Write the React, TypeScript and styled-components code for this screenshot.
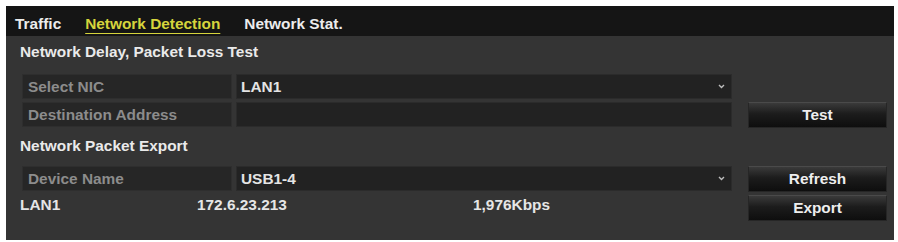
import React from 'react';
import styled, { createGlobalStyle } from 'styled-components';

const GlobalStyle = createGlobalStyle`
  html, body {
    margin: 0;
    padding: 0;
    background: #ffffff;
  }
  body {
    font-family: "Liberation Sans", Arial, sans-serif;
  }
`;

const tabs = ['Traffic', 'Network Detection', 'Network Stat.'];

const Chevron: React.FC = () => (
  <svg width="7" height="5" viewBox="0 0 7 5">
    <path d="M1 1 L3.5 3.5 L6 1" stroke="#bdbdbd" strokeWidth="1.4" fill="none" />
  </svg>
);

const App: React.FC = () => {
  return (
    <Page>
      <GlobalStyle />
      <Panel>
        <TabBar>
          {tabs.map((t, i) => (
            <Tab key={t} $active={i === 1}>
              {t}
            </Tab>
          ))}
        </TabBar>

        <Content>
          <SectionTitle>Network Delay, Packet Loss Test</SectionTitle>
          <Row>
            <Field>
              <Label>Select NIC</Label>
              <Value>
                LAN1
                <Chevron />
              </Value>
            </Field>
            <ButtonSlot />
          </Row>
          <Row>
            <Field>
              <Label>Destination Address</Label>
              <Value />
            </Field>
            <ButtonSlot>
              <Button>Test</Button>
            </ButtonSlot>
          </Row>

          <SectionTitle $second>Network Packet Export</SectionTitle>
          <Row>
            <Field>
              <Label>Device Name</Label>
              <Value>
                USB1-4
                <Chevron />
              </Value>
            </Field>
            <ButtonSlot>
              <Button>Refresh</Button>
            </ButtonSlot>
          </Row>
          <Row $info>
            <InfoLine>
              <InfoCell $w={177}>LAN1</InfoCell>
              <InfoCell $w={276}>172.6.23.213</InfoCell>
              <InfoCell $w={200}>1,976Kbps</InfoCell>
            </InfoLine>
            <ButtonSlot>
              <Button>Export</Button>
            </ButtonSlot>
          </Row>
        </Content>
      </Panel>
    </Page>
  );
};

const Page = styled.div`
  padding: 6px 4px 2px 6px;
  width: 898px;
  box-sizing: border-box;
`;

const Panel = styled.div`
  width: 888px;
  height: 234px;
  background: #343434;
  color: #e6e6e6;
  font-size: 15.4px;
  font-weight: 700;
  overflow: hidden;
`;

const TabBar = styled.div`
  height: 30px;
  background: #151515;
  display: flex;
  align-items: center;
  gap: 24px;
  padding: 5px 0 0 9px;
  box-sizing: border-box;
`;

const Tab = styled.div<{ $active?: boolean }>`
  color: ${(p) => (p.$active ? '#d6d43c' : '#ececec')};
  text-decoration: ${(p) => (p.$active ? 'underline' : 'none')};
  text-underline-offset: 4px;
  text-decoration-thickness: 1px;
  line-height: 18px;
`;

const Content = styled.div`
  padding: 0 0 0 14px;
  display: flex;
  flex-direction: column;
`;

const SectionTitle = styled.div<{ $second?: boolean }>`
  height: 32px;
  margin-bottom: ${(p) => (p.$second ? '4px' : '6px')};
  display: flex;
  align-items: center;
  color: #eaeaea;
`;

const Row = styled.div<{ $info?: boolean }>`
  display: flex;
  align-items: center;
  height: 25px;
  margin-bottom: 3px;
  margin-top: ${(p) => (p.$info ? '1px' : '0')};
`;

const Field = styled.div`
  margin-left: 2px;
  width: 710px;
  height: 25px;
  display: flex;
  gap: 4px;
`;

const Label = styled.div`
  width: 210px;
  background: #262626;
  border: 1px solid #2e2e2e;
  box-sizing: border-box;
  color: #8c8c8c;
  padding-left: 5px;
  display: flex;
  align-items: center;
`;

const Value = styled.div`
  flex: 1;
  background: #222222;
  border: 1px solid #2b2b2b;
  box-sizing: border-box;
  color: #e4e4e4;
  padding: 0 6px 0 4px;
  display: flex;
  align-items: center;
  justify-content: space-between;
`;

const ButtonSlot = styled.div`
  margin-left: 16px;
  width: 139px;
  height: 26px;
`;

const Button = styled.div`
  height: 26px;
  box-sizing: border-box;
  background: linear-gradient(180deg, #3a3a3a 0%, #1c1c1c 45%, #0e0e0e 100%);
  border: 1px solid #262626;
  border-top-color: #4a4a4a;
  color: #eeeeee;
  display: flex;
  align-items: center;
  justify-content: center;
  padding-top: 1px;
`;

const InfoLine = styled.div`
  width: 712px;
  display: flex;
  margin-top: -6px;
`;

const InfoCell = styled.div<{ $w: number }>`
  width: ${(p) => p.$w}px;
  color: #e6e6e6;
`;

export default App;
